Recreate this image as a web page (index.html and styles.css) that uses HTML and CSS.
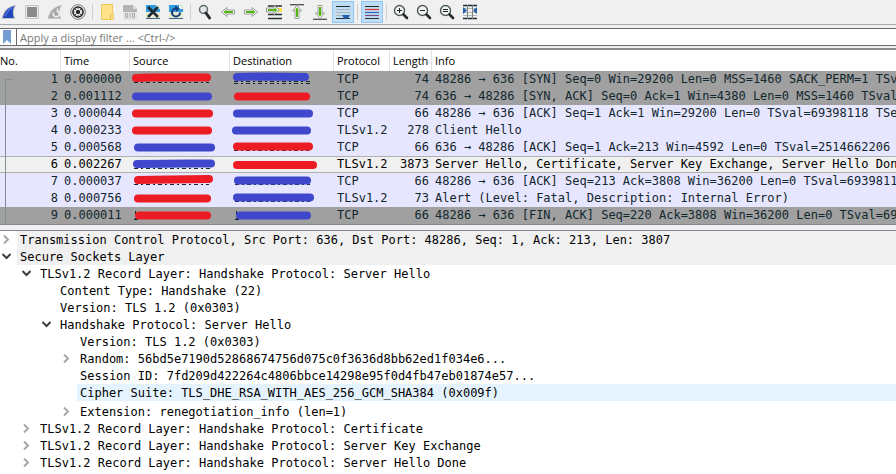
FILE: index.html
```html
<!DOCTYPE html>
<html lang="en">
  <head>
    <meta charset="utf-8">
    <title>Packet Capture</title>
    <link rel="stylesheet" href="styles.css">
  </head>
  <body>
    <div class="toolbar">
      <button class="tool" title="Start capture"><svg viewBox="0 0 16 16"><path d="M1 14.500C3 7 7 2.500 14.500 1.500C11.500 6 12 10 13.500 14.500Z" fill="#1f46bd" stroke="#c5c5c5"/><path d="M4 12.500C6 8 8 5 11.500 3.500" stroke="#4f70d8" stroke-width="1.500" fill="none"/></svg></button>
      <button class="tool" title="Stop capture"><svg viewBox="0 0 16 16"><path d="M1.500 1.500h13v13h-13z" fill="#eee" stroke="#c4c4c4"/><path d="M3 3h10v10H3z" fill="#8b8b8b"/></svg></button>
      <button class="tool" title="Restart capture"><svg viewBox="0 0 16 16"><path d="M1 14.500C3 7 7 2.500 14.500 1.500C11.500 6 12 10 13.500 14.500Z" fill="#a9a9a9" stroke="#c5c5c5"/><path d="M6.500 8.500a3 3 0 1 0 4-1.500V5M10.500 4.500v4" stroke="#eee" stroke-width="1.500" fill="none"/></svg></button>
      <button class="tool" title="Capture options"><svg viewBox="0 0 16 16"><circle cx="8" cy="8" r="7.300" fill="#eee" stroke="#777"/><circle cx="8" cy="8" r="5.800" fill="#262626"/><circle cx="8" cy="8" r="3.500" fill="none" stroke="#eee" stroke-width="1.600" stroke-dasharray="2 .75"/><circle cx="8" cy="8" r="2.700" fill="none" stroke="#eee"/><circle cx="8" cy="8" r="1.500" fill="#262626"/></svg></button>
      <span class="sep"></span>
      <button class="tool" title="Open file"><svg viewBox="0 0 16 16"><path d="M2.500.500h11v10h1v5h-12z" fill="#ffe38a" stroke="#ecc85a"/><path d="M11.500 15v-4l2-1" fill="none" stroke="#e5bb48"/></svg></button>
      <button class="tool" title="Save file"><svg viewBox="0 0 16 16"><path d="M1 1h10l4 4v11H1z" fill="#e4e4e4"/><path d="M1 1h10l4 4v3H1z" fill="#b4b4b4"/><path d="M11 1v4h4" fill="#ddd"/><path d="M3.500 9.500h2v4h-2zM8 9v5M10.500 9.500h2v4h-2z" fill="none" stroke="#aaa"/></svg></button>
      <button class="tool" title="Close file"><svg viewBox="0 0 16 16"><path d="M1 1h14v14H1z" fill="#e9edcf"/><path d="M1 1h10l4 4v3H1z" fill="#2f9be0"/><path d="M1 14.500h14" stroke="#3f648b"/><path d="M11 1v4h4" fill="#fff"/><path d="M3 3l10 10M13 3L3 13" stroke="#202a30" stroke-width="2.600"/></svg></button>
      <button class="tool" title="Reload file"><svg viewBox="0 0 16 16"><path d="M1 1h14v14H1z" fill="#e9edcf"/><path d="M1 1h10l4 4v3H1z" fill="#2f9be0"/><path d="M1 14.500h14" stroke="#3f648b"/><path d="M11 1v4h4" fill="#fff"/><path d="M12 8.500a4 4 0 1 1-4-4" fill="none" stroke="#173f7c" stroke-width="2.200"/><path d="M7 1.500l5 3-4 3.500z" fill="#173f7c"/></svg></button>
      <span class="sep"></span>
      <button class="tool" title="Find packet"><svg viewBox="0 0 16 16"><circle cx="6.500" cy="5.500" r="4" fill="#e4e8ea" stroke="#5e686b" stroke-width="1.500"/><path d="M9 9l3.500 5" stroke="#252b2d" stroke-width="3" stroke-linecap="round"/></svg></button>
      <button class="tool" title="Previous packet"><svg viewBox="0 0 16 16"><path d="M1.500 8L7 3.500V6h7.500v4H7v2.500z" fill="#fff" stroke="#9a9a9a" stroke-linejoin="round"/><path d="M3.500 8L6.500 5.500V7H13v2H6.500v1.500z" fill="#55b512"/></svg></button>
      <button class="tool" title="Next packet"><svg viewBox="0 0 16 16"><path d="M14.500 8L9 3.500V6H1.500v4H9v2.500z" fill="#fff" stroke="#9a9a9a" stroke-linejoin="round"/><path d="M12.500 8L9.500 5.500V7H3v2h6.500v1.500z" fill="#55b512"/></svg></button>
      <button class="tool" title="Go to packet"><svg viewBox="0 0 16 16"><path d="M2 2h14M2 10.500h14M2 14.500h14" stroke="#263032" stroke-width="1.300"/><path d="M10 4h6v4h-6z" fill="#ffe34e"/><path d="M13.500 6L8 1.500V4H.500v4H8v2.500z" fill="#fff" stroke="#9a9a9a" stroke-linejoin="round"/><path d="M11.500 6L8.500 3.500V5H2v2h6.500v1.500z" fill="#55b512"/></svg></button>
      <button class="tool" title="First packet"><svg viewBox="0 0 16 16"><path d="M1 .700h14" stroke="#4a5052" stroke-width="1.300"/><path d="M8 1.500L12.500 7H10v7.500H6V7H3.500z" fill="#fff" stroke="#9a9a9a" stroke-linejoin="round"/><path d="M8 3.500L10.500 6.500H9V13H7V6.500H5.500z" fill="#55b512"/></svg></button>
      <button class="tool" title="Last packet"><svg viewBox="0 0 16 16"><path d="M1 15.300h14" stroke="#4a5052" stroke-width="1.300"/><path d="M8 14.500L12.500 9H10V1.500H6V9H3.500z" fill="#fff" stroke="#9a9a9a" stroke-linejoin="round"/><path d="M8 12.500L10.500 9.500H9V3H7v6.500H5.500z" fill="#55b512"/></svg></button>
      <button class="tool active" title="Auto scroll"><svg viewBox="0 0 16 16"><path d="M1 2.500h14M1 14.500h14" stroke="#1f2d35" stroke-width="1.200"/><path d="M1 5.500h14M1 8.500h14M1 11.500h14" stroke="#aeb8b4"/><path d="M7 11h8l-1 2-1.500 1.500h-3L8 13z" fill="#2560ad"/></svg></button>
      <span class="sep"></span>
      <button class="tool active" title="Colorize packets"><svg viewBox="0 0 16 16"><path d="M1 2.500h14M1 14.500h14" stroke="#1f2d35" stroke-width="1.200"/><path d="M1 5.500h14" stroke="#e3342f" stroke-width="1.200"/><path d="M1 8.500h14" stroke="#2e62b4" stroke-width="1.200"/><path d="M1 11.500h14" stroke="#705078" stroke-width="1.200"/></svg></button>
      <span class="sep"></span>
      <button class="tool" title="Zoom in"><svg viewBox="0 0 16 16"><circle cx="6.500" cy="6.500" r="5" fill="#f2f4f4" stroke="#4e585b" stroke-width="1.400"/><path d="M10.500 10.500l3.500 3.500" stroke="#252b2d" stroke-width="2.600" stroke-linecap="round"/><path d="M4 6.500h5M6.500 4v5" stroke="#222"/></svg></button>
      <button class="tool" title="Zoom out"><svg viewBox="0 0 16 16"><circle cx="6.500" cy="6.500" r="5" fill="#f2f4f4" stroke="#4e585b" stroke-width="1.400"/><path d="M10.500 10.500l3.500 3.500" stroke="#252b2d" stroke-width="2.600" stroke-linecap="round"/><path d="M4 6.500h5" stroke="#222"/></svg></button>
      <button class="tool" title="Normal size"><svg viewBox="0 0 16 16"><circle cx="6.500" cy="6.500" r="5" fill="#f2f4f4" stroke="#4e585b" stroke-width="1.400"/><path d="M10.500 10.500l3.500 3.500" stroke="#252b2d" stroke-width="2.600" stroke-linecap="round"/><path d="M4 5.500h5M4 7.500h5" stroke="#222"/></svg></button>
      <button class="tool" title="Resize columns"><svg viewBox="0 0 16 16"><path d="M1 1.500h14M1 14.500h14" stroke="#1f2d35" stroke-width="1.300"/><path d="M1 11.500h14M1 8.500h14M1 4.500h14" stroke="#b4b9b6"/><path d="M5.500 1v14M10.500 1v14" stroke="#7d8486"/><path d="M1 3l4 3.500L1 10zM15 3l-4 3.500 4 3.500z" fill="#2560ad"/></svg></button>
    </div>

    <div class="filter">
      <button class="bookmark" title="Bookmarks"><svg viewBox="0 0 8 14"><path d="M0 0h8v14L4 10l-4 4z" fill="#739fd2"/></svg></button>
      <input type="text" class="filter-input" aria-label="Display filter" placeholder="Apply a display filter … &lt;Ctrl-/&gt;">
    </div>

    <div class="packets">
      <svg class="related" viewBox="0 0 10 153"><path d="M8 8.500H.500V153" fill="none" stroke="#7f8f96"/></svg>
      <table class="packet-list">
        <colgroup>
          <col class="c-no"><col class="c-time"><col class="c-addr"><col class="c-dest"><col class="c-proto"><col class="c-len"><col>
        </colgroup>
        <thead>
          <tr><th>No.</th><th>Time</th><th>Source</th><th>Destination</th><th>Protocol</th><th>Length</th><th>Info</th></tr>
        </thead>
        <tbody>
          <tr class="dark">
            <td class="num">1</td><td>0.000000</td>
            <td class="addr"><svg class="mark" viewBox="0 0 100 17"><path class="rest" d="M4 11.500h75"/><path class="red" d="M6 7L20 6.500H77"/></svg></td>
            <td class="addr"><svg class="mark" viewBox="0 0 100 17"><path class="rest" d="M4 12.500h76"/><path class="rest" d="M4 10.500h76"/><path class="blue" d="M7 6L30 5.500L75 6"/></svg></td>
            <td>TCP</td><td class="num">74</td><td>48286 → 636 [SYN] Seq=0 Win=29200 Len=0 MSS=1460 SACK_PERM=1 TSval</td>
          </tr>
          <tr class="dark">
            <td class="num">2</td><td>0.001112</td>
            <td class="addr"><svg class="mark" viewBox="0 0 100 17"><path class="blue" d="M6 8.500h72"/></svg></td>
            <td class="addr"><svg class="mark" viewBox="0 0 100 17"><path class="red" d="M8 8.500h68"/></svg></td>
            <td>TCP</td><td class="num">74</td><td>636 → 48286 [SYN, ACK] Seq=0 Ack=1 Win=4380 Len=0 MSS=1460 TSval=2</td>
          </tr>
          <tr>
            <td class="num">3</td><td>0.000044</td>
            <td class="addr"><svg class="mark" viewBox="0 0 100 17"><path class="red" d="M6 8.500h73"/></svg></td>
            <td class="addr"><svg class="mark" viewBox="0 0 100 17"><path class="blue" d="M7 8.500h72"/></svg></td>
            <td>TCP</td><td class="num">66</td><td>48286 → 636 [ACK] Seq=1 Ack=1 Win=29200 Len=0 TSval=69398118 TSecr</td>
          </tr>
          <tr>
            <td class="num">4</td><td>0.000233</td>
            <td class="addr"><svg class="mark" viewBox="0 0 100 17"><path class="red" d="M6 8.500h72"/></svg></td>
            <td class="addr"><svg class="mark" viewBox="0 0 100 17"><path class="blue" d="M6 8.500h71"/></svg></td>
            <td>TLSv1.2</td><td class="num">278</td><td>Client Hello</td>
          </tr>
          <tr>
            <td class="num">5</td><td>0.000568</td>
            <td class="addr"><svg class="mark" viewBox="0 0 100 17"><path class="blue" d="M8 8.500h73"/></svg></td>
            <td class="addr"><svg class="mark" viewBox="0 0 100 17"><path class="rest" d="M4 11.500h75"/><path class="red" d="M7 7.500h72"/></svg></td>
            <td>TCP</td><td class="num">66</td><td>636 → 48286 [ACK] Seq=1 Ack=213 Win=4592 Len=0 TSval=2514662206 TS</td>
          </tr>
          <tr class="selected">
            <td class="num">6</td><td>0.002267</td>
            <td class="addr"><svg class="mark" viewBox="0 0 100 17"><path class="rest" d="M4 12.500h76"/><path class="blue" d="M7 8L60 7.500H81"/></svg></td>
            <td class="addr"><svg class="mark" viewBox="0 0 100 17"><path class="red" d="M7 9h76"/></svg></td>
            <td>TLSv1.2</td><td class="num">3873</td><td>Server Hello, Certificate, Server Key Exchange, Server Hello Done</td>
          </tr>
          <tr>
            <td class="num">7</td><td>0.000037</td>
            <td class="addr"><svg class="mark" viewBox="0 0 100 17"><path class="rest" d="M4 11.500h75"/><path class="red" d="M8 7L40 6.500L79 6"/></svg></td>
            <td class="addr"><svg class="mark" viewBox="0 0 100 17"><path class="rest" d="M5 11.500h75"/><path class="blue" d="M8 7.500h69"/></svg></td>
            <td>TCP</td><td class="num">66</td><td>48286 → 636 [ACK] Seq=213 Ack=3808 Win=36200 Len=0 TSval=69398119</td>
          </tr>
          <tr>
            <td class="num">8</td><td>0.000756</td>
            <td class="addr"><svg class="mark" viewBox="0 0 100 17"><path class="red" d="M8 8.500h69"/></svg></td>
            <td class="addr"><svg class="mark" viewBox="0 0 100 17"><path class="rest" d="M5 11.500h75"/><path class="blue" d="M7 7.500h73"/></svg></td>
            <td>TLSv1.2</td><td class="num">73</td><td>Alert (Level: Fatal, Description: Internal Error)</td>
          </tr>
          <tr class="dark">
            <td class="num">9</td><td>0.000011</td>
            <td class="addr"><svg class="mark" viewBox="0 0 100 17"><path class="rest" d="M4 12.500h4M5.500 4v8"/><path class="red" d="M9 8.500h68"/></svg></td>
            <td class="addr"><svg class="mark" viewBox="0 0 100 17"><path class="rest" d="M5 12.500h4M6.500 4v8"/><path class="blue" d="M10 8.500h67"/></svg></td>
            <td>TCP</td><td class="num">66</td><td>48286 → 636 [FIN, ACK] Seq=220 Ack=3808 Win=36200 Len=0 TSval=6939</td>
          </tr>
        </tbody>
      </table>
    </div>

    <div class="details">
      <ul class="tree">
        <li>
          <div class="row section"><button class="arrow closed" title="Expand"><svg viewBox="0 0 9 9"><path d="M2 .500l4 4-4 4"/></svg></button><span class="text">Transmission Control Protocol, Src Port: 636, Dst Port: 48286, Seq: 1, Ack: 213, Len: 3807</span></div>
        </li>
        <li>
          <div class="row section"><button class="arrow" title="Collapse"><svg viewBox="0 0 9 9"><path d="M.500 2l4 4 4-4"/></svg></button><span class="text">Secure Sockets Layer</span></div>
          <ul>
            <li>
              <div class="row"><button class="arrow" title="Collapse"><svg viewBox="0 0 9 9"><path d="M.500 2l4 4 4-4"/></svg></button><span class="text">TLSv1.2 Record Layer: Handshake Protocol: Server Hello</span></div>
              <ul>
                <li class="row leaf"><span class="text">Content Type: Handshake (22)</span></li>
                <li class="row leaf"><span class="text">Version: TLS 1.2 (0x0303)</span></li>
                <li>
                  <div class="row"><button class="arrow" title="Collapse"><svg viewBox="0 0 9 9"><path d="M.500 2l4 4 4-4"/></svg></button><span class="text">Handshake Protocol: Server Hello</span></div>
                  <ul>
                    <li class="row leaf"><span class="text">Version: TLS 1.2 (0x0303)</span></li>
                    <li class="row"><button class="arrow closed" title="Expand"><svg viewBox="0 0 9 9"><path d="M2 .500l4 4-4 4"/></svg></button><span class="text">Random: 56bd5e7190d52868674756d075c0f3636d8bb62ed1f034e6...</span></li>
                    <li class="row leaf"><span class="text">Session ID: 7fd209d422264c4806bbce14298e95f0d4fb47eb01874e57...</span></li>
                    <li class="row leaf current"><span class="text">Cipher Suite: TLS_DHE_RSA_WITH_AES_256_GCM_SHA384 (0x009f)</span></li>
                    <li class="row"><button class="arrow closed" title="Expand"><svg viewBox="0 0 9 9"><path d="M2 .500l4 4-4 4"/></svg></button><span class="text">Extension: renegotiation_info (len=1)</span></li>
                  </ul>
                </li>
              </ul>
            </li>
            <li class="row"><button class="arrow closed" title="Expand"><svg viewBox="0 0 9 9"><path d="M2 .500l4 4-4 4"/></svg></button><span class="text">TLSv1.2 Record Layer: Handshake Protocol: Certificate</span></li>
            <li class="row"><button class="arrow closed" title="Expand"><svg viewBox="0 0 9 9"><path d="M2 .500l4 4-4 4"/></svg></button><span class="text">TLSv1.2 Record Layer: Handshake Protocol: Server Key Exchange</span></li>
            <li class="row"><button class="arrow closed" title="Expand"><svg viewBox="0 0 9 9"><path d="M2 .500l4 4-4 4"/></svg></button><span class="text">TLSv1.2 Record Layer: Handshake Protocol: Server Hello Done</span></li>
          </ul>
        </li>
      </ul>
    </div>
  </body>
</html>
```

FILE: styles.css
```css
*{
  box-sizing: border-box;
}
body{
  margin: 0;
  background: #f0f0f0;
  color: #000;
  font-family: "Open Sans", "Noto Sans", sans-serif;
  font-size: 11px;
  overflow: hidden;
}
button{
  padding: 0;
  border: 0;
  background: none;
}
svg{
  display: block;
}

/* toolbar */
.toolbar{
  display: flex;
  gap: 1px;
  margin-left: -2px;
  padding: 1px 0;
  border-bottom: 1px solid #a8a8a8;
}
.tool{
  display: flex;
  flex: none;
  align-items: center;
  justify-content: center;
  width: 22px;
  height: 22px;
}
.tool svg{
  flex: none;
  width: 16px;
  height: 16px;
}
.tool.active{
  background: #c0dcf3;
  border: 1px solid #90c8f6;
}
.sep{
  width: 5px;
  margin: 3px 0;
  background: linear-gradient(#cfcfcf, #cfcfcf) center / 1px 100% no-repeat;
}

/* display filter */
.filter{
  display: flex;
  height: 18px;
  margin: 3px 0 2px;
  background: #fff;
  border-top: 1px solid #696969;
  border-bottom: 1px solid #696969;
}
.bookmark{
  width: 17px;
  padding-left: 3px;
  border-right: 1px solid #696969;
}
.bookmark svg{
  width: 8px;
  height: 14px;
}
.filter-input{
  flex: 1;
  min-width: 0;
  padding: 0 3px;
  border: 0;
  outline: 0;
  background: none;
  font: inherit;
}
.filter-input::placeholder{
  color: #777;
}

/* packet list */
.packets{
  position: relative;
  overflow: hidden;
  background: #fff;
  border-top: 2px solid #8c8c8c;
  border-bottom: 1px solid #828790;
}
.related{
  position: absolute;
  left: 5px;
  top: 21px;
  width: 10px;
  height: 153px;
}
.packet-list{
  width: 100%;
  table-layout: fixed;
  border-collapse: separate;
  border-spacing: 0;
}
.c-no{ width: 61px; }
.c-time{ width: 69px; }
.c-addr{ width: 100px; }
.c-dest{ width: 104px; }
.c-proto{ width: 56px; }
.c-len{ width: 42px; }
.packet-list th{
  height: 21px;
  padding: 0 3px;
  border-right: 1px solid #e2e2e2;
  font-weight: normal;
  line-height: 20px;
  text-align: left;
  white-space: nowrap;
}
.packet-list th:first-child{
  padding-left: 0;
}
.packet-list th:last-child{
  border-right: 0;
}
.packet-list td{
  height: 17px;
  padding: 0 3px;
  overflow: hidden;
  background: #e7e6ff;
  color: #12272e;
  font-family: "DejaVu Sans Mono", monospace;
  font-size: 12px;
  line-height: 17px;
  white-space: nowrap;
}
.packet-list td:last-child{
  padding-right: 0;
}
.packet-list .dark td{
  background: #a0a0a0;
}
.packet-list .selected td{
  background: #f0f0f0;
  border-top: 1px solid #b0b0b0;
  border-bottom: 1px solid #b0b0b0;
  color: #000;
  line-height: 15px;
}
.packet-list .num{
  text-align: right;
}
.packet-list .addr{
  padding: 0;
}
.mark{
  width: 100px;
  height: 17px;
}
.selected .mark{
  margin: -1px 0;
}
.mark path{
  fill: none;
  stroke-linecap: round;
  stroke-width: 8px;
}
.mark .red{ stroke: #ed1c24; }
.mark .blue{ stroke: #3f48cc; }
.mark .rest{
  stroke: #12272e;
  stroke-width: 1px;
  stroke-linecap: butt;
  stroke-dasharray: 4 3 2 3;
}

/* packet details */
.details{
  margin-top: 5px;
  padding-bottom: 4px;
  background: #fff;
  border-top: 1px solid #828790;
  font-family: "DejaVu Sans Mono", monospace;
  font-size: 12px;
  white-space: nowrap;
}
.tree, .tree ul{
  margin: 0;
  padding: 0;
  list-style: none;
}
.tree ul{
  margin-left: 20px;
}
.row{
  display: flex;
  height: 17px;
}
.leaf{
  padding-left: 17px;
}
.text{
  flex: 1;
  padding-left: 3px;
  line-height: 19px;
}
.section .text{
  background: #f0f0f0;
}
.current .text{
  background: #e5f3ff;
}
.current{
  margin-bottom: 2px;
}
.arrow{
  display: flex;
  align-items: center;
  width: 17px;
  height: 17px;
  padding-left: 2px;
}
.arrow svg{
  width: 9px;
  height: 9px;
  fill: none;
  stroke: #404040;
  stroke-width: 2px;
}
.arrow.closed svg{
  stroke: #a6a6a6;
}
```
